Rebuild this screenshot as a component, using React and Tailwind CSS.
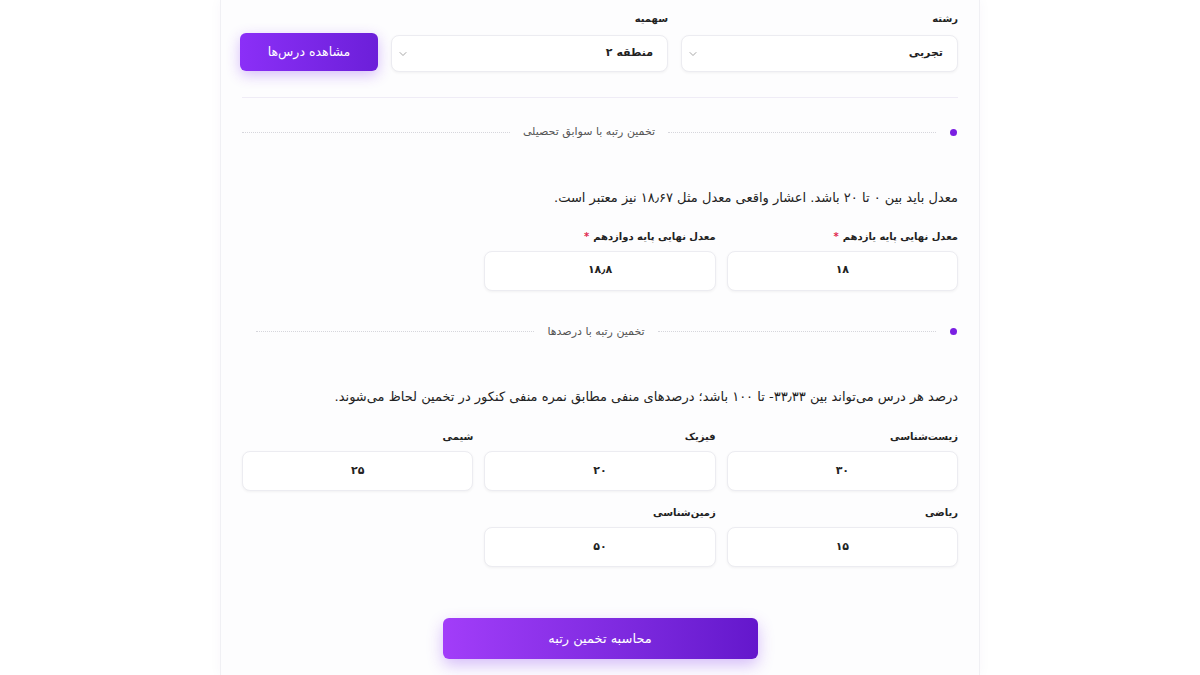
import React from 'react';
import { ChevronDown } from 'lucide-react';

const font = { fontFamily: '"DejaVu Sans", "Noto Sans", sans-serif' };

const SelectBox = ({ label, value }) => (
  <div className="flex flex-col gap-[9px]">
    <label className="text-[10px] font-bold text-[#222]">{label}</label>
    <div className="h-[37px] bg-white rounded-lg border border-[#ececf1] shadow-[0_1px_3px_rgba(0,0,0,0.05)] flex items-center justify-between pr-[14px] pl-[5px]">
      <span className="text-[11px] font-semibold text-[#222]">{value}</span>
      <ChevronDown className="w-3 h-3 text-[#888]" strokeWidth={1.5} />
    </div>
  </div>
);

const Field = ({ label, value, required }) => (
  <div className="flex flex-col gap-[8px]">
    <label className="text-[10px] font-bold text-[#222] h-[14px]">
      {label}
      {required && <span className="text-[#e0284f] mr-1">*</span>}
    </label>
    <div className="h-[40px] bg-white rounded-lg border border-[#ececf1] shadow-[0_1px_3px_rgba(0,0,0,0.05)] flex items-center justify-center">
      <span className="text-[11px] font-semibold text-[#222]">{value}</span>
    </div>
  </div>
);

const SectionHeader = ({ title, leftPad }) => (
  <div className="flex items-center">
    <span className="w-[7px] h-[7px] rounded-full bg-[#7a1fe2] shrink-0 mr-[1px]"></span>
    <span className="flex-1 border-t border-dotted border-[#d6d6dc] mr-[14px]"></span>
    <span className="text-[11px] text-[#555] mx-[13px]">{title}</span>
    <span className={`flex-1 border-t border-dotted border-[#d6d6dc] ${leftPad ? 'ml-[14px]' : ''}`}></span>
  </div>
);

export default function App() {
  return (
    <div className="min-h-screen bg-white flex justify-center" style={font}>
      <div dir="rtl" className="w-[760px] bg-[#fdfdfe] border-x border-[#f0f0f4] shadow-[0_0_12px_rgba(80,60,140,0.04)] px-[21px] pt-[11px] pb-4">
        <div className="grid grid-cols-[277px_277px_138px] gap-x-[13px] items-end">
          <SelectBox label="رشته" value="تجربی" />
          <SelectBox label="سهمیه" value="منطقه ۲" />
          <button className="h-[38px] mb-[1px] rounded-md text-white text-[12.5px] bg-gradient-to-l from-[#6c1fd9] to-[#8b2ff7] shadow-[0_4px_14px_rgba(124,40,240,0.3)]">
            مشاهده درس‌ها
          </button>
        </div>

        <div className="border-t border-[#efecf6] mt-[25px]"></div>

        <div className="mt-[26px]">
          <SectionHeader title="تخمین رتبه با سوابق تحصیلی" />
        </div>

        <p className="mt-[46px] text-[13px] leading-[22px] text-[#222]">
          معدل باید بین ۰ تا ۲۰ باشد. اعشار واقعی معدل مثل ۱۸٫۶۷ نیز معتبر است.
        </p>

        <div className="grid grid-cols-3 gap-x-[11px] mt-[20px]">
          <Field label="معدل نهایی پایه یازدهم" value="۱۸" required />
          <Field label="معدل نهایی پایه دوازدهم" value="۱۸٫۸" required />
        </div>

        <div className="mt-[33px]">
          <SectionHeader title="تخمین رتبه با درصدها" leftPad />
        </div>

        <p className="mt-[46px] text-[13px] leading-[22px] text-[#222]">
          درصد هر درس می‌تواند بین ۳۳٫۳۳- تا ۱۰۰ باشد؛ درصدهای منفی مطابق نمره منفی کنکور در تخمین لحاظ می‌شوند.
        </p>

        <div className="grid grid-cols-3 gap-x-[11px] gap-y-[14px] mt-[21px]">
          <Field label="زیست‌شناسی" value="۳۰" />
          <Field label="فیزیک" value="۲۰" />
          <Field label="شیمی" value="۲۵" />
          <Field label="ریاضی" value="۱۵" />
          <Field label="زمین‌شناسی" value="۵۰" />
        </div>

        <div className="flex justify-center mt-[51px]">
          <button className="w-[315px] h-[41px] rounded-md text-white text-[13px] bg-gradient-to-l from-[#6417cc] to-[#a23df9] shadow-[0_6px_16px_rgba(124,40,240,0.3)]">
            محاسبه تخمین رتبه
          </button>
        </div>
      </div>
    </div>
  );
}
